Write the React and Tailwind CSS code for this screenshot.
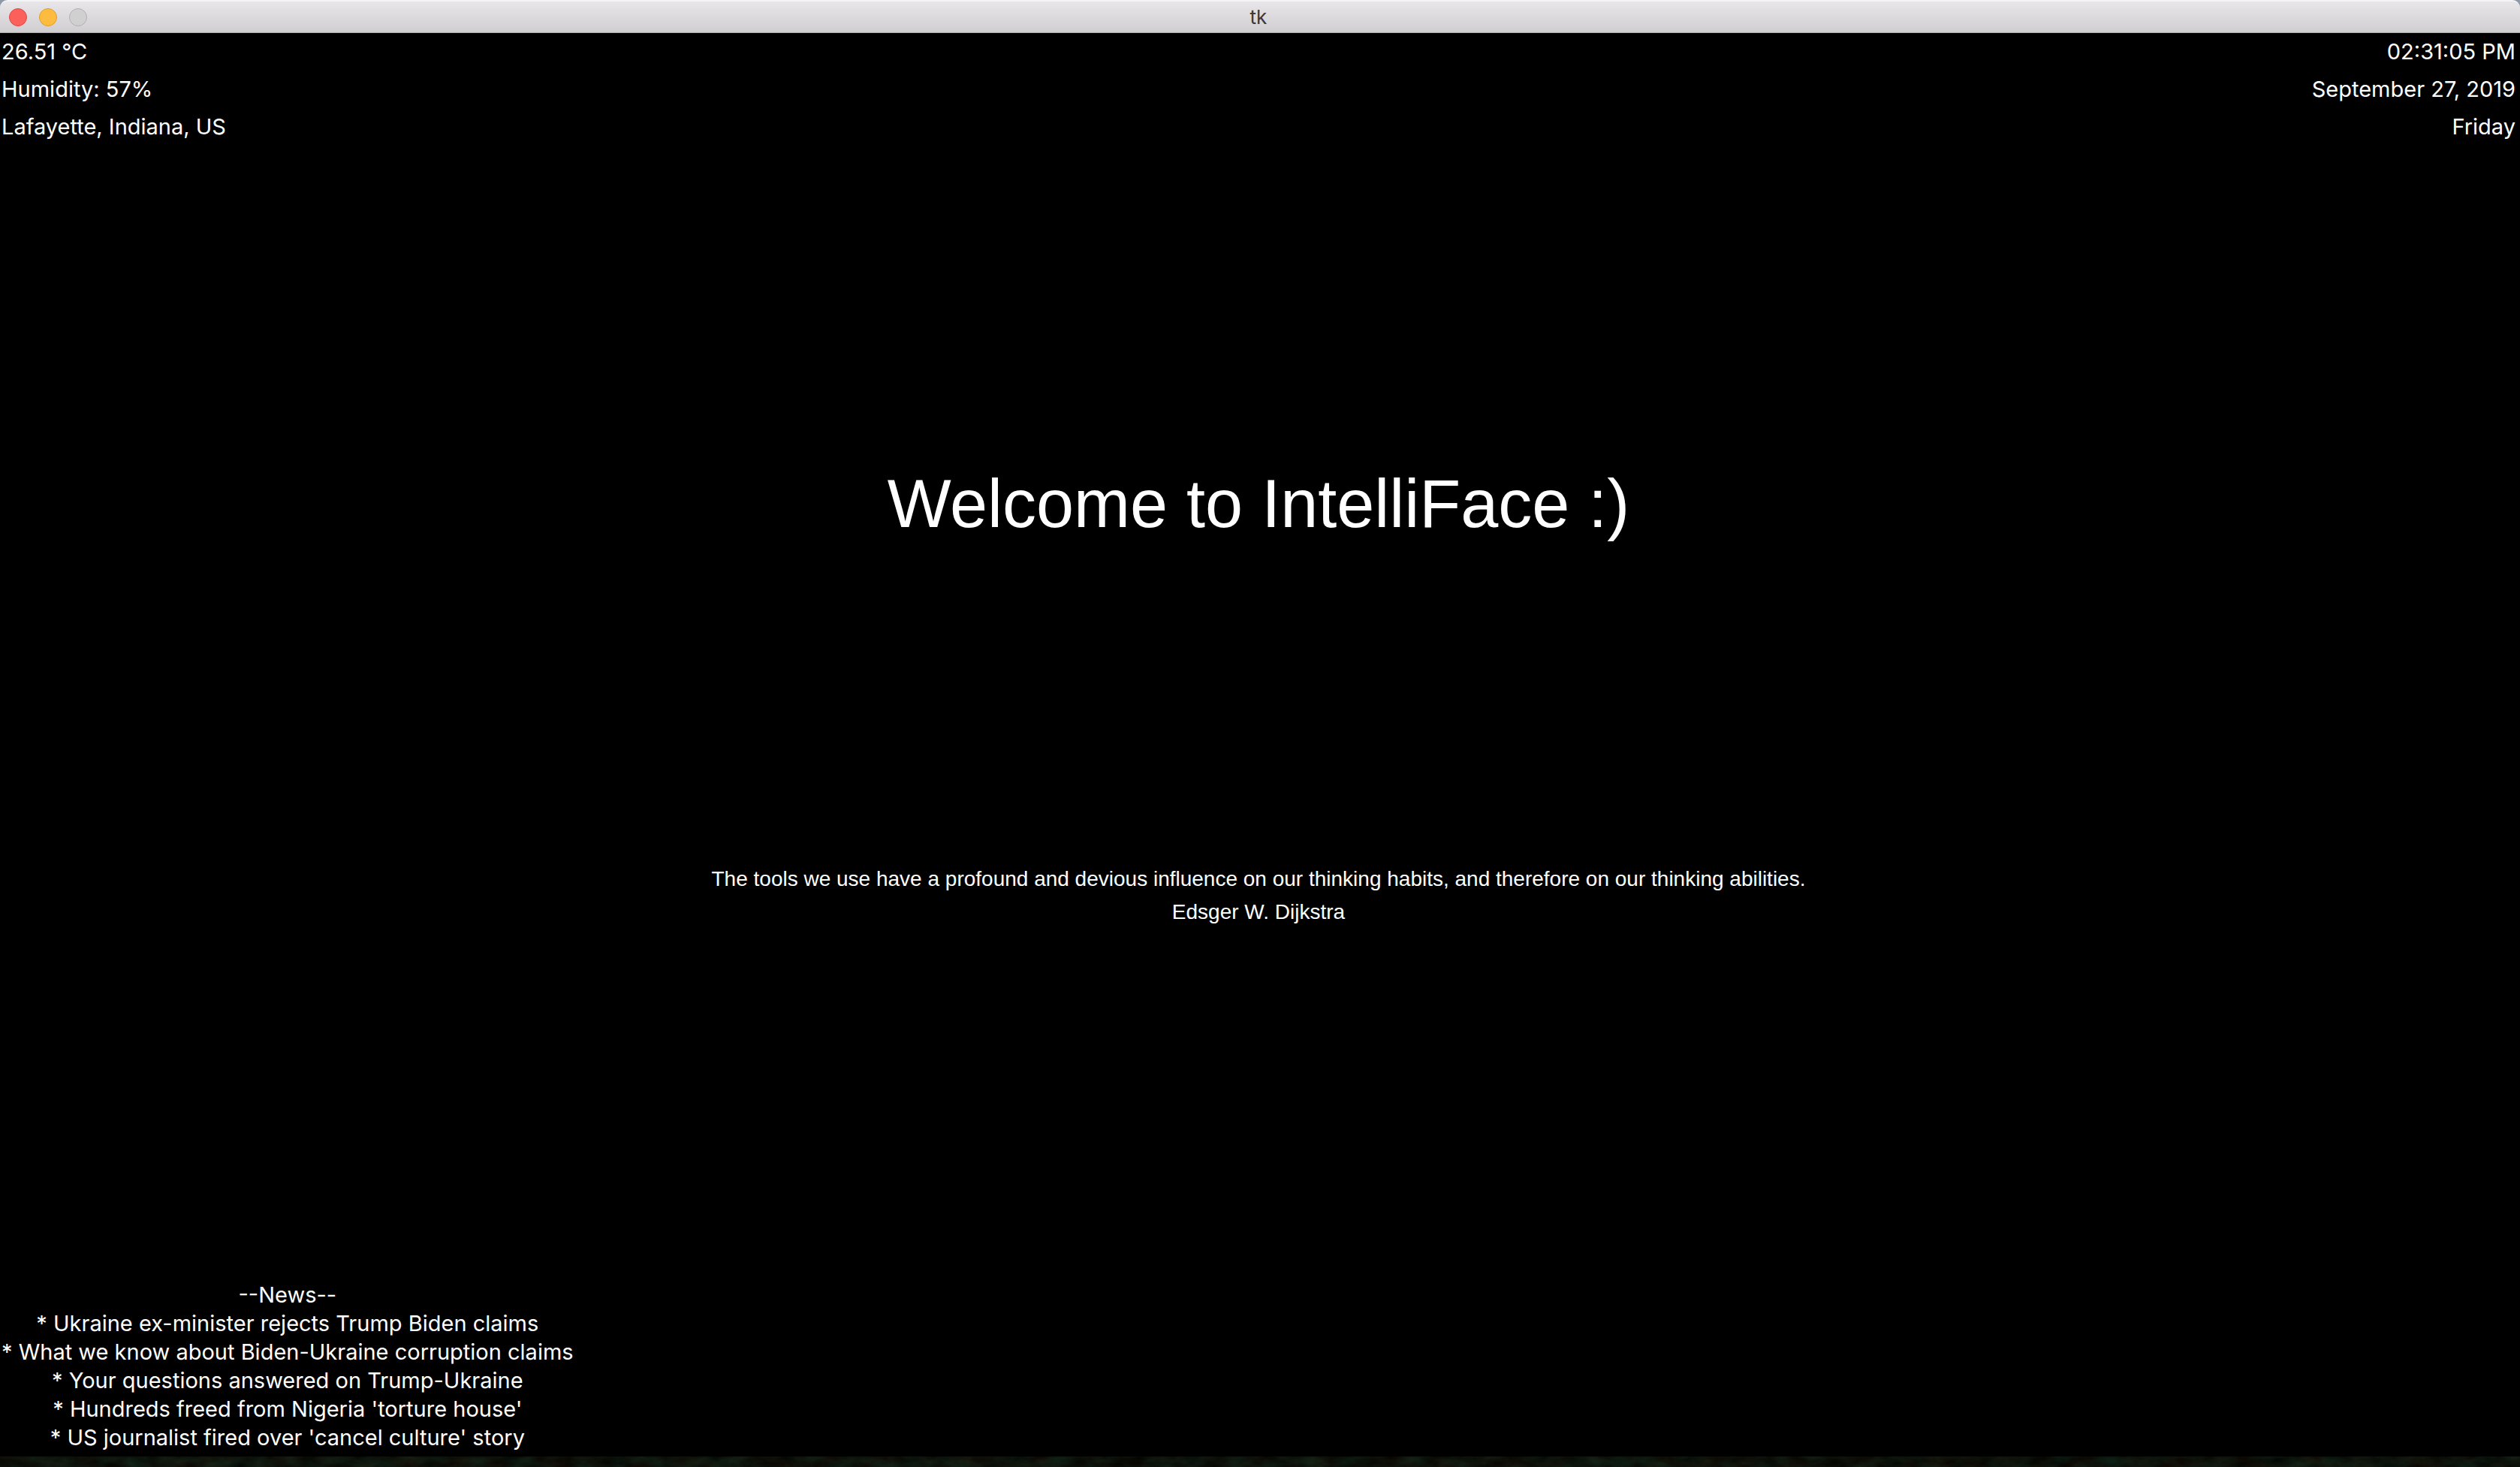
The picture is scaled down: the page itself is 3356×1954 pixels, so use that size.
const weather = ["26.51 °C", "Humidity: 57%", "Lafayette, Indiana, US"];
const clock = ["02:31:05 PM", "September 27, 2019", "Friday"];
const headlines = [
  "Ukraine ex-minister rejects Trump Biden claims",
  "What we know about Biden-Ukraine corruption claims",
  "Your questions answered on Trump-Ukraine",
  "Hundreds freed from Nigeria 'torture house'",
  "US journalist fired over 'cancel culture' story",
];

function TitleBar() {
  return (
    <header className="grid h-11 grid-cols-[1fr_auto_1fr] items-center rounded-t-[10px] border-t-2 border-b border-t-[#f4f3f5] border-b-[#b0aeb0] bg-linear-to-b from-[#e8e6e9] to-[#d0ced1] pl-3 pr-4">
      <div className="flex gap-4">
        <button type="button" aria-label="Close" className="size-6 rounded-full border border-[#e2463f] bg-[#fc605b]" />
        <button type="button" aria-label="Minimize" className="size-6 rounded-full border border-[#dfa023] bg-[#fdbc40]" />
        <button type="button" aria-label="Zoom" disabled className="size-6 rounded-full border border-[#b1b0b1] bg-[#d1d0d1]" />
      </div>
      <h1 className="text-[26px] leading-8 text-[#3a383a]">tk</h1>
    </header>
  );
}

function Desktop() {
  return (
    <svg className="block h-3.5 w-full bg-[#0a0e0b]" aria-hidden="true">
      <filter id="foliage" x="0" y="0" width="100%" height="100%" colorInterpolationFilters="sRGB">
        <feTurbulence type="fractalNoise" baseFrequency="0.03 0.06" numOctaves="4" seed="7" />
        <feColorMatrix values="0.08 0.06 0 0 -0.02  0.02 0.16 0 0 -0.02  0 0.12 0 0 -0.02  0 0 0 0 1" />
      </filter>
      <rect width="100%" height="100%" filter="url(#foliage)" />
    </svg>
  );
}

export default function App() {
  return (
    <div className="flex min-h-screen flex-col bg-[#8d99a5] font-['Inter',sans-serif]">
      <TitleBar />
      <main className="flex flex-1 flex-col justify-between bg-black pb-1.5 pl-0.5 pr-1.5 text-[29px] text-white">
        <div className="flex justify-between leading-[50px]">
          <section aria-label="Weather">
            {weather.map((line) => (
              <p key={line}>{line}</p>
            ))}
          </section>
          <section aria-label="Clock" className="text-right">
            {clock.map((line) => (
              <p key={line}>{line}</p>
            ))}
          </section>
        </div>
        <h2 className="text-center font-['Liberation_Sans',sans-serif] text-[90px] leading-[104px]">
          Welcome to IntelliFace :)
        </h2>
        <figure className="pb-11 text-center font-['Liberation_Sans',sans-serif] text-[28px] leading-[44px]">
          <blockquote>
            The tools we use have a profound and devious influence on our thinking habits, and therefore on our thinking abilities.
          </blockquote>
          <figcaption>Edsger W. Dijkstra</figcaption>
        </figure>
        <section className="self-start text-center leading-[38px]">
          <h3>--News--</h3>
          <ul>
            {headlines.map((line) => (
              <li key={line}>* {line}</li>
            ))}
          </ul>
        </section>
      </main>
      <Desktop />
    </div>
  );
}
